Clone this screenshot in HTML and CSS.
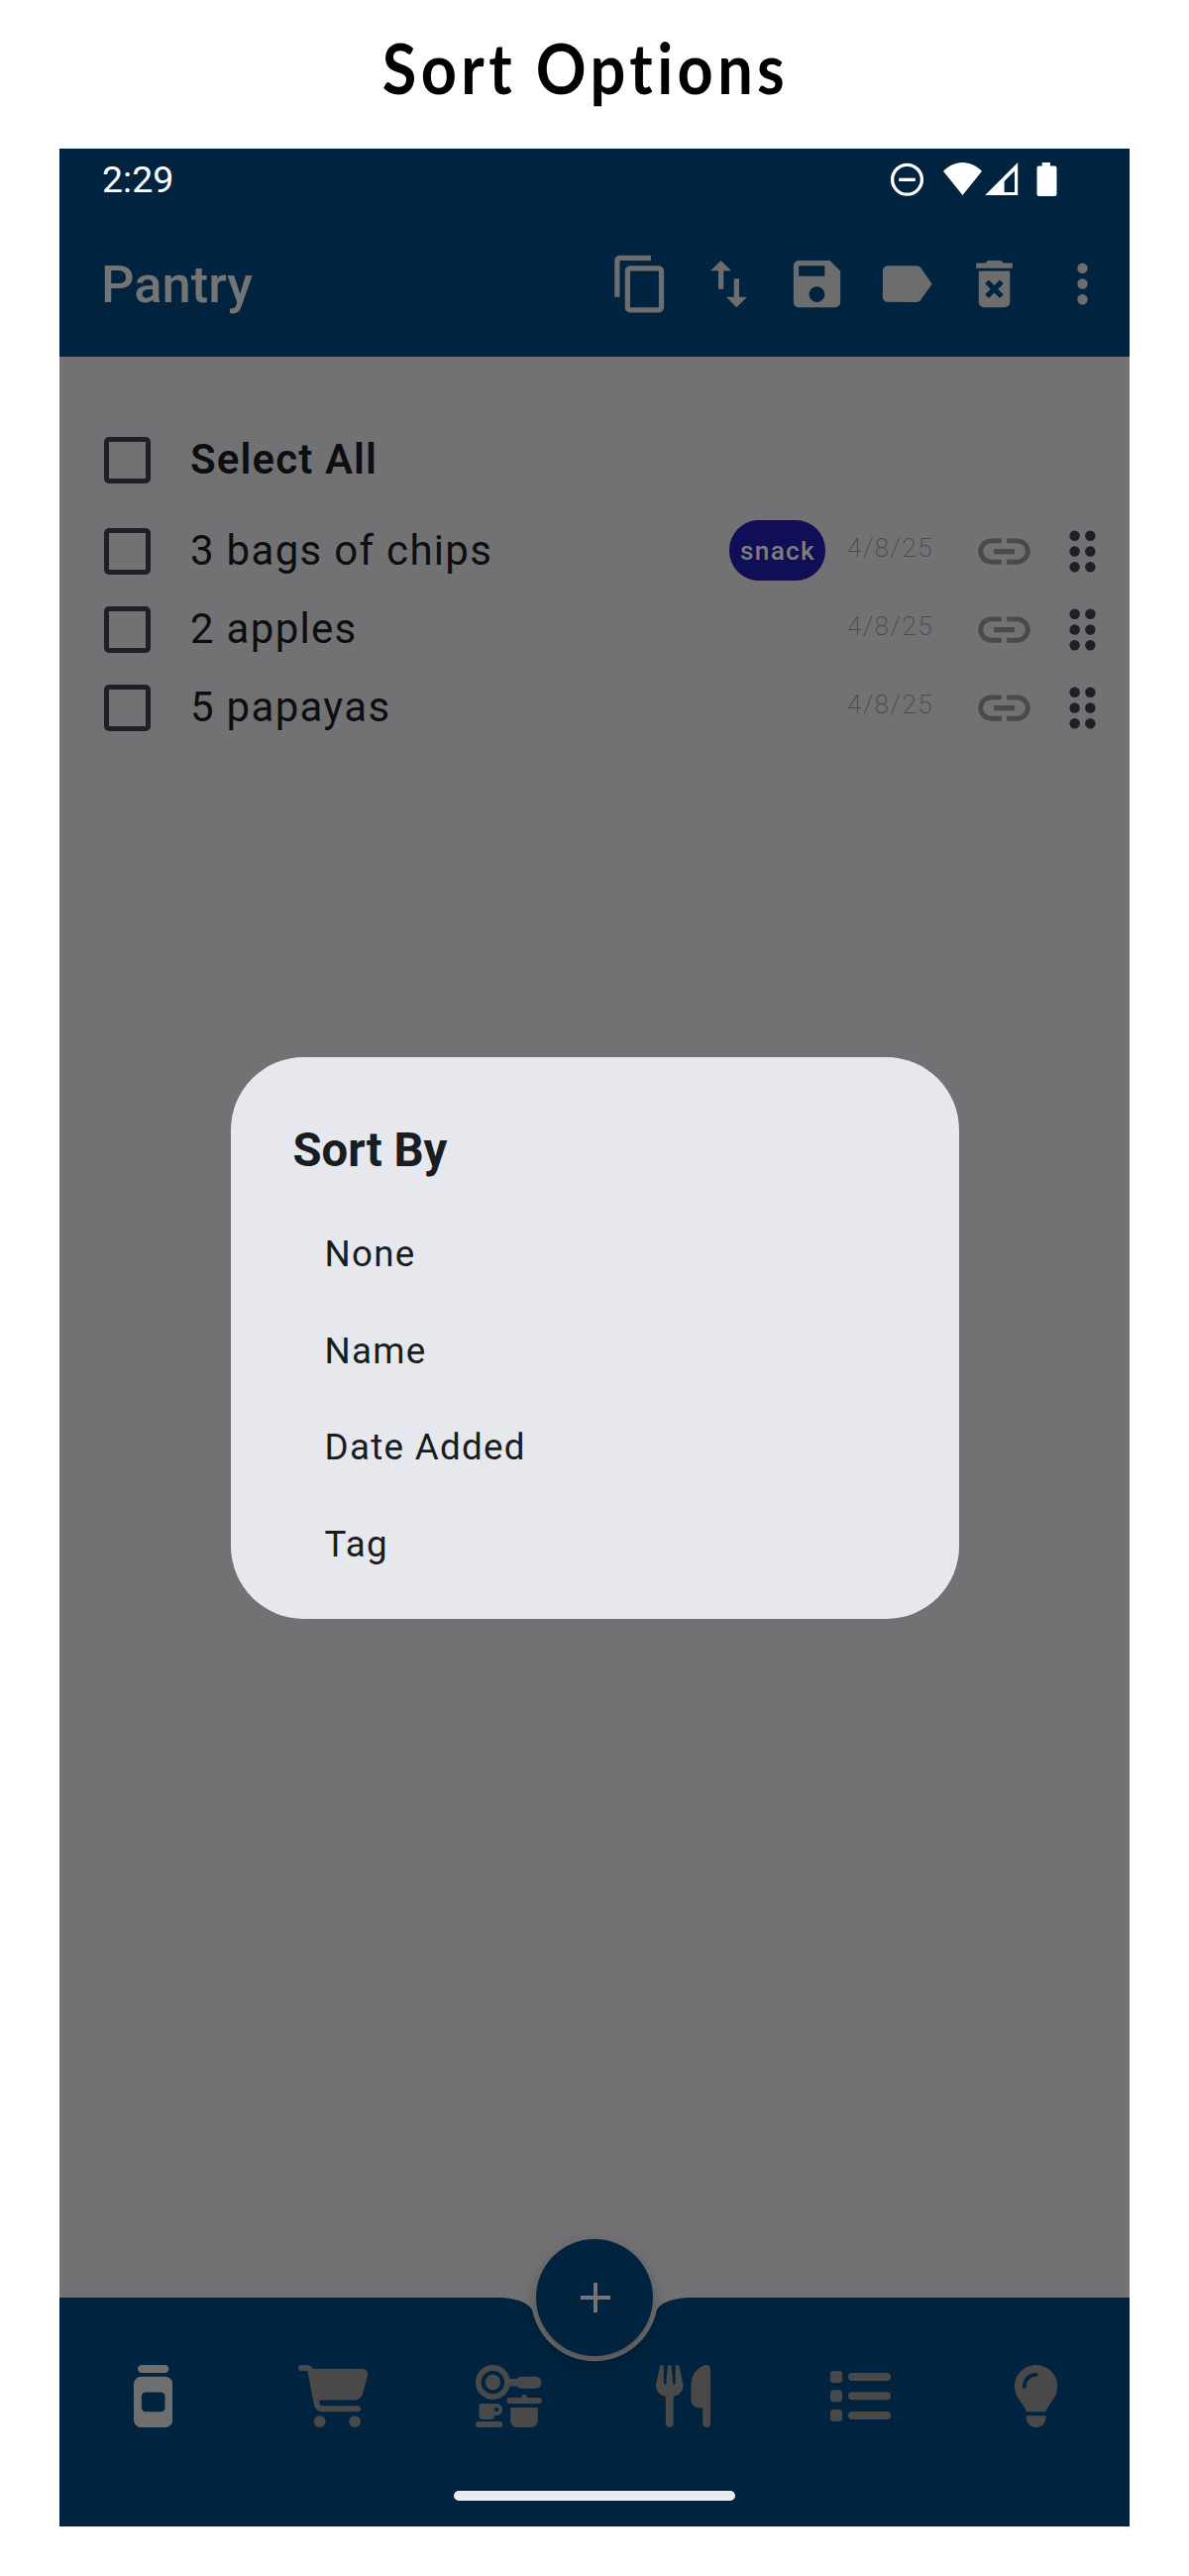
FILE: index.html
```html
<!DOCTYPE html>
<html lang="en">
<head>
<meta charset="utf-8">
<title>Sort Options</title>
<link rel="stylesheet" href="styles.css">
</head>
<body>
<svg class="defs" width="0" height="0" aria-hidden="true">
  <symbol id="link" viewBox="0 0 24 24"><path d="M3.9 12c0-1.71 1.39-3.1 3.1-3.1h4V7H7c-2.76 0-5 2.24-5 5s2.24 5 5 5h4v-1.9H7c-1.71 0-3.1-1.39-3.1-3.1zM8 13h8v-2H8v2zm9-6h-4v1.9h4c1.71 0 3.1 1.39 3.1 3.1s-1.39 3.1-3.1 3.1h-4V17h4c2.76 0 5-2.24 5-5s-2.24-5-5-5z"/></symbol>
  <symbol id="drag" viewBox="0 0 24 24"><circle cx="9" cy="6" r="2"/><circle cx="15" cy="6" r="2"/><circle cx="9" cy="12" r="2"/><circle cx="15" cy="12" r="2"/><circle cx="9" cy="18" r="2"/><circle cx="15" cy="18" r="2"/></symbol>
</svg>

<h1 class="caption"><span class="caption-text">Sort Options</span></h1>

<div class="screen">
  <div class="status">
    <span class="clock">2:29</span>
    <svg class="status-icons" width="192" height="36" viewBox="-24 0 192 36">
      <circle cx="-3.500" cy="18.300" r="14.900" fill="none" stroke="#fff" stroke-width="3.300"/>
      <path d="M-11.800 16.700h16.600v3.300h-16.600z"/>
      <path d="M52.400 1C60 1 67 4.500 72 9.800L52.500 34 33 9.800C38 4.500 45 1 52.400 1z"/>
      <path fill-rule="evenodd" d="M108.200 1v33H75.200zM105 9.500L94.600 20v11H105z"/>
      <path d="M132.700 1h8.300v3.500h4.500q2 0 2 2V33q0 2-2 2h-16q-2 0-2-2V6.500q0-2 2-2h3.200z"/>
    </svg>
  </div>

  <header class="appbar">
    <h2 class="title">Pantry</h2>
    <div class="tools">
      <svg class="icon" viewBox="0 0 24 24"><path d="M16 1H4c-1.100 0-2 .9-2 2v14h2V3h12V1zm3 4H8c-1.100 0-2 .9-2 2v14c0 1.100.9 2 2 2h11c1.100 0 2-.9 2-2V7c0-1.100-.9-2-2-2zm0 16H8V7h11v14z"/></svg>
      <svg class="icon" viewBox="0 0 24 24"><path d="M9 3L5 6.990h3V14h2V6.990h3L9 3zm7 14.010V10h-2v7.010h-3L15 21l4-3.990h-3z"/></svg>
      <svg class="icon" viewBox="0 0 24 24"><path d="M17 3H5c-1.110 0-2 .9-2 2v14c0 1.100.89 2 2 2h14c1.100 0 2-.9 2-2V7l-4-4zm-5 16c-1.660 0-3-1.340-3-3s1.340-3 3-3 3 1.340 3 3-1.340 3-3 3zm3-10H5V5h10v4z"/></svg>
      <svg class="icon" viewBox="0 0 24 24"><path d="M17.630 5.840C17.270 5.330 16.670 5 16 5L5 5.010C3.900 5.010 3 5.900 3 7v10c0 1.100.9 1.990 2 1.990L16 19c.67 0 1.270-.33 1.630-.84L22 12l-4.370-6.160z"/></svg>
      <svg class="icon" viewBox="0 0 24 24"><path d="M6 19c0 1.100.9 2 2 2h8c1.100 0 2-.9 2-2V7H6v12zm2.460-7.120l1.410-1.410L12 12.590l2.120-2.120 1.410 1.410L13.410 14l2.120 2.120-1.410 1.410L12 15.410l-2.120 2.120-1.410-1.410L10.590 14l-2.130-2.120zM15.500 4l-1-1h-5l-1 1H5v2h14V4z"/></svg>
      <svg class="icon" viewBox="0 0 24 24"><circle cx="12" cy="6" r="2"/><circle cx="12" cy="12" r="2"/><circle cx="12" cy="18" r="2"/></svg>
    </div>
  </header>

  <main class="list">
    <div class="row row-all"><span class="box"></span><strong class="name">Select All</strong></div>
    <div class="row"><span class="box"></span><span class="name">3 bags of chips</span><span class="tag">snack</span><span class="date">4/8/25</span><svg class="icon link"><use href="#link"/></svg><svg class="icon drag"><use href="#drag"/></svg></div>
    <div class="row"><span class="box"></span><span class="name">2 apples</span><span class="date">4/8/25</span><svg class="icon link"><use href="#link"/></svg><svg class="icon drag"><use href="#drag"/></svg></div>
    <div class="row"><span class="box"></span><span class="name">5 papayas</span><span class="date">4/8/25</span><svg class="icon link"><use href="#link"/></svg><svg class="icon drag"><use href="#drag"/></svg></div>
  </main>

  <footer class="bottom">
    <svg class="bar-shape" width="1080" height="231" viewBox="0 0 1080 231"><path d="M0 0H442C460 0 474 5 477.300 13A64 64 0 0 0 602.700 13C606 5 620 0 638 0H1080V231H0z"/></svg>
    <div class="fab"><svg width="30" height="30" viewBox="0 0 30 30"><path d="M13 0h4v13h13v4H17v13h-4V17H0v-4h13z"/></svg></div>
    <nav class="nav">
      <svg class="active" width="39.400" height="63" viewBox="0 0 320 512"><path d="M32 32C32 14.300 46.300 0 64 0H256c17.700 0 32 14.300 32 32s-14.300 32-32 32H64C46.300 64 32 49.700 32 32zM0 160c0-35.300 28.700-64 64-64H256c35.300 0 64 28.700 64 64V448c0 35.300-28.700 64-64 64H64c-35.300 0-64-28.700-64-64V160zm96 64c-17.700 0-32 14.300-32 32v96c0 17.700 14.300 32 32 32H224c17.700 0 32-14.300 32-32V256c0-17.700-14.300-32-32-32H96z"/></svg>
      <svg width="70.900" height="63" viewBox="0 0 576 512"><path d="M0 24C0 10.700 10.700 0 24 0H69.500c22 0 41.500 12.800 50.600 32h411c26.300 0 45.500 25 38.600 50.400l-41 152.300c-8.500 31.400-37 53.300-69.500 53.300H170.700l5.400 28.500c2.200 11.300 12.100 19.500 23.600 19.500H488c13.300 0 24 10.700 24 24s-10.700 24-24 24H199.700c-34.600 0-64.300-24.600-70.700-58.500L77.400 54.500c-.7-3.800-4-6.500-7.900-6.500H24C10.700 48 0 37.300 0 24zM128 464a48 48 0 1 1 96 0 48 48 0 1 1-96 0zm336-48a48 48 0 1 1 0 96 48 48 0 1 1 0-96z"/></svg>
      <svg width="67" height="63" viewBox="0 0 67 63"><circle cx="17.400" cy="17.500" r="14.600" fill="none" stroke="#494949" stroke-width="5.700"/><circle cx="17.400" cy="17.500" r="7.700"/><path d="M33 13.900h8.500q2-2.100 4.900-2.100h14.200a6 6 0 0 1 0 12H46.400q-2.900 0-4.900-2.200H33z"/><path d="M34.500 33h11.700a2.900 2.900 0 0 1 5.800 0h11.800a3 3 0 0 1 0 6H34.500a3 3 0 0 1 0-6z"/><path d="M35.200 43h27.600v12.500q0 7.500-7.500 7.500H42.700q-7.500 0-7.500-7.500z"/><path fill-rule="evenodd" d="M5.500 39h15.800a6 6 0 0 1 0 12h-2q0 4-4.500 4H8q-4.500 0-4.500-4.500V41q0-2 2-2zM19.300 43v4h2a2 2 0 0 0 0-4z"/><rect y="57" width="27.300" height="6" rx="3"/></svg>
      <svg width="55.100" height="63" viewBox="0 0 448 512"><path d="M416 0C400 0 288 32 288 176V288c0 35.300 28.700 64 64 64h32V480c0 17.700 14.300 32 32 32s32-14.300 32-32V32c0-17.700-14.300-32-32-32zM64 16C64 7.800 57.900 1 49.700.1S34.200 4.600 32.400 12.500L2.100 148.800C.7 155.100 0 161.500 0 167.900c0 45.900 35.100 83.600 80 87.700V480c0 17.700 14.300 32 32 32s32-14.300 32-32V255.600c44.900-4.100 80-41.800 80-87.700 0-6.400-.7-12.800-2.100-19.100L191.600 12.500c-1.800-8-9.300-13.300-17.400-12.400S160 7.800 160 16V150.200c0 5.400-4.400 9.800-9.800 9.800-5.100 0-9.300-3.900-9.800-9L127.900 14.600C127.200 6.300 120.300 0 112 0s-15.200 6.300-15.900 14.600L83.700 151c-.5 5.100-4.700 9-9.800 9-5.400 0-9.800-4.400-9.800-9.800V16z"/></svg>
      <svg width="61" height="63" viewBox="0 0 61 63"><rect y="6" width="12" height="12" rx="3"/><rect y="25.200" width="12" height="12" rx="3"/><rect y="45" width="12" height="12" rx="3"/><rect x="18" y="8" width="43" height="8" rx="4"/><rect x="18" y="27.200" width="43" height="8" rx="4"/><rect x="18" y="47" width="43" height="8" rx="4"/></svg>
      <svg width="43.300" height="63" viewBox="16 0 352 512"><path d="M272 384c9.600-31.900 29.500-59.100 49.200-86.200 5.200-7.100 10.400-14.200 15.400-21.400 19.800-28.500 31.400-63 31.400-100.300C368 78.800 289.200 0 192 0S16 78.800 16 176c0 37.300 11.600 71.900 31.400 100.300 5 7.200 10.200 14.300 15.400 21.400 19.800 27.100 39.700 54.400 49.200 86.200H272zM192 512c44.200 0 80-35.800 80-80V416H112v16c0 44.200 35.800 80 80 80zM112 176c0 8.800-7.200 16-16 16s-16-7.200-16-16c0-61.900 50.100-112 112-112 8.800 0 16 7.200 16 16s-7.200 16-16 16c-44.200 0-80 35.800-80 80z"/></svg>
    </nav>
    <div class="home"></div>
  </footer>

  <div class="dialog">
    <h3 class="dialog-title">Sort By</h3>
    <ul class="options"><li>None</li><li>Name</li><li>Date Added</li><li>Tag</li></ul>
  </div>
</div>
</body>
</html>
```

FILE: styles.css
```css
* { box-sizing: border-box; }
body { margin: 0; width: 1200px; height: 2600px; background: #fff; font-family: Roboto, sans-serif; overflow: hidden; }
h1, h2, h3, ul { margin: 0; padding: 0; list-style: none; }
svg { display: block; flex: none; }
.defs { position: absolute; }

.caption { height: 150px; display: flex; justify-content: center; padding: 28px 19px 0 0; font: 700 70px/80px Lato, sans-serif; letter-spacing: 4.9px; color: #000; white-space: nowrap; }
.caption-text { transform: scaleX(.9); }

.screen { position: relative; display: flex; flex-direction: column; width: 1080px; height: 2400px; margin: 0 60px; background: #727274; }

.status { display: flex; justify-content: space-between; height: 63px; padding: 0 53px 0 43px; background: #00243f; color: #fff; }
.clock { font-size: 37.5px; line-height: 62px; }
.status-icons { margin-top: 13px; fill: #fff; }

.appbar { display: flex; justify-content: space-between; align-items: center; height: 147px; padding: 0 16px 0 42px; background: #00243f; }
.title { font-weight: 500; font-size: 52.5px; line-height: 62px; padding-top: 1px; color: #747474; }
.tools { display: flex; gap: 26.25px; fill: #6d6d6d; }
.icon { width: 63px; height: 63px; }

.list { flex: 1; padding-top: 65.5px; }
.row { display: flex; align-items: center; height: 78.75px; padding: 0 16px 0 45px; }
.row-all { margin-bottom: 13px; }
.box { width: 47px; height: 47px; border: 5.25px solid #1f2023; border-radius: 5px; }
.name { flex: 1; margin-left: 40px; padding-bottom: 2px; font-size: 42px; letter-spacing: 1.3px; color: #0d0e10; }
.row-all .name { font-weight: 600; letter-spacing: 1.1px; }
.tag { width: 97px; height: 61px; margin: 0 22px 2px 0; padding-left: 1px; border-radius: 30px; background: #0f0e56; color: #7c7c7c; font-weight: 500; font-size: 26.25px; line-height: 62px; letter-spacing: 1.3px; text-align: center; }
.date { width: 127px; padding-bottom: 7px; font-weight: 200; font-size: 26.25px; letter-spacing: 1.5px; color: #4a4a4a; }
.link { fill: #4a4a4a; }
.drag { margin-left: 16px; fill: #1f2023; }

.bottom { position: relative; height: 231px; }
.bar-shape { position: absolute; inset: 0; fill: #00243f; }
.fab { position: absolute; left: 481px; top: -59px; width: 118px; height: 118px; border-radius: 50%; background: #00243f; box-shadow: 0 8px 14px rgba(0, 0, 0, .22), 0 2px 20px rgba(0, 0, 0, .08); display: grid; place-items: center; padding-left: 2px; fill: #747474; }
.nav { position: relative; display: grid; grid-template-columns: 166.3px 178.8px 182px 176.2px 186px 44px; padding: 68px 0 0 74.7px; fill: #494949; }
.nav .active { fill: #6f6f6f; }
.home { position: relative; width: 284px; height: 10px; margin: 64px auto 0; border-radius: 5px; background: #e9edf0; }

.dialog { position: absolute; left: 172.5px; top: 916.5px; width: 735px; height: 567px; border-radius: 73.5px; background: #e6e8ed; color: #191c20; padding: 63px 63px 0; }
.dialog-title { font-weight: 700; font-size: 47.25px; line-height: 62px; }
.options { margin-top: 25.5px; padding-left: 32px; }
.options li { height: 97.5px; line-height: 97.5px; font-size: 36.75px; letter-spacing: 1.3px; }
```
